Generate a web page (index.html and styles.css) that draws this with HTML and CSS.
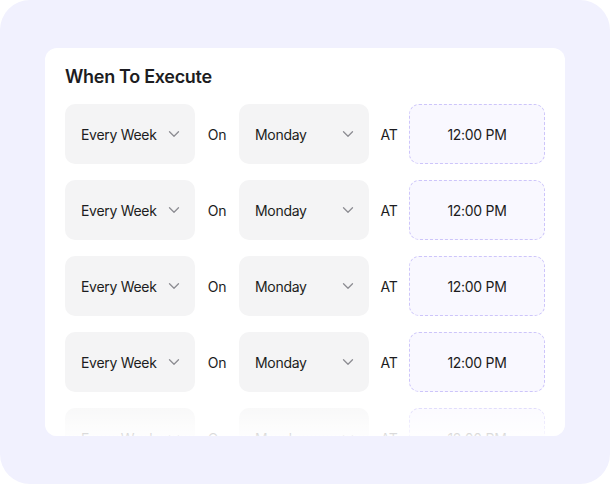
FILE: index.html
```html
<!DOCTYPE html>
<html lang="en">
<head>
    <meta charset="UTF-8">
    <meta name="viewport" content="width=device-width, initial-scale=1.0">
    <title>When To Execute</title>
    <link rel="stylesheet" href="styles.css">
</head>
<body>
    <div class="frame">
        <div class="card">
            <h2 class="title">When To Execute</h2>

            <div class="rows">
                <div class="row">
                    <div class="select"><span>Every Week</span><svg class="chevron" viewBox="0 0 12 8"><path d="M1.5 1.8 6 6.2l4.5-4.4"/></svg></div>
                    <span class="label on">On</span>
                    <div class="select"><span>Monday</span><svg class="chevron" viewBox="0 0 12 8"><path d="M1.5 1.8 6 6.2l4.5-4.4"/></svg></div>
                    <span class="label at">AT</span>
                    <div class="time">12:00 PM</div>
                </div>
                <div class="row">
                    <div class="select"><span>Every Week</span><svg class="chevron" viewBox="0 0 12 8"><path d="M1.5 1.8 6 6.2l4.5-4.4"/></svg></div>
                    <span class="label on">On</span>
                    <div class="select"><span>Monday</span><svg class="chevron" viewBox="0 0 12 8"><path d="M1.5 1.8 6 6.2l4.5-4.4"/></svg></div>
                    <span class="label at">AT</span>
                    <div class="time">12:00 PM</div>
                </div>
                <div class="row">
                    <div class="select"><span>Every Week</span><svg class="chevron" viewBox="0 0 12 8"><path d="M1.5 1.8 6 6.2l4.5-4.4"/></svg></div>
                    <span class="label on">On</span>
                    <div class="select"><span>Monday</span><svg class="chevron" viewBox="0 0 12 8"><path d="M1.5 1.8 6 6.2l4.5-4.4"/></svg></div>
                    <span class="label at">AT</span>
                    <div class="time">12:00 PM</div>
                </div>
                <div class="row">
                    <div class="select"><span>Every Week</span><svg class="chevron" viewBox="0 0 12 8"><path d="M1.5 1.8 6 6.2l4.5-4.4"/></svg></div>
                    <span class="label on">On</span>
                    <div class="select"><span>Monday</span><svg class="chevron" viewBox="0 0 12 8"><path d="M1.5 1.8 6 6.2l4.5-4.4"/></svg></div>
                    <span class="label at">AT</span>
                    <div class="time">12:00 PM</div>
                </div>
                <div class="row">
                    <div class="select"><span>Every Week</span><svg class="chevron" viewBox="0 0 12 8"><path d="M1.5 1.8 6 6.2l4.5-4.4"/></svg></div>
                    <span class="label on">On</span>
                    <div class="select"><span>Monday</span><svg class="chevron" viewBox="0 0 12 8"><path d="M1.5 1.8 6 6.2l4.5-4.4"/></svg></div>
                    <span class="label at">AT</span>
                    <div class="time">12:00 PM</div>
                </div>
            </div>
        </div>
    </div>
</body>
</html>
```

FILE: styles.css
```css
* {
    margin: 0;
    padding: 0;
    box-sizing: border-box;
}

body {
    background: #ffffff;
    font-family: Inter, 'Noto Sans', sans-serif;
    color: #1c1c21;
}

.frame {
    width: 610px;
    height: 484px;
    background: #f1f1fe;
    border-radius: 30px;
    padding: 48px 45px;
}

.card {
    position: relative;
    height: 388px;
    background: #ffffff;
    border-radius: 12px;
    padding: 18px 20px 0;
    overflow: hidden;
}

/* fade out the rows that run past the bottom */
.card::after {
    content: '';
    position: absolute;
    left: 0;
    right: 0;
    bottom: 0;
    height: 34px;
    background: linear-gradient(to bottom, rgba(255, 255, 255, 0.3), rgba(255, 255, 255, 0.88));
}

.title {
    font-size: 18px;
    line-height: 22px;
    font-weight: 600;
    letter-spacing: -0.3px;
    margin-bottom: 16px;
}

.rows {
    display: flex;
    flex-direction: column;
    gap: 16px;
}

.row {
    display: flex;
    align-items: center;
    height: 60px;
    font-size: 14px;
    letter-spacing: -0.3px;
}

.select {
    width: 130px;
    height: 60px;
    flex-shrink: 0;
    display: flex;
    align-items: center;
    justify-content: space-between;
    background: #f4f4f5;
    border-radius: 10px;
    padding: 0 15px 0 16px;
}

.chevron {
    width: 12px;
    height: 8px;
    fill: none;
    stroke: #8d8d93;
    stroke-width: 1.3;
    stroke-linecap: round;
    stroke-linejoin: round;
}

.label {
    text-align: center;
    flex-shrink: 0;
}

.label.on {
    width: 44px;
}

.label.at {
    width: 40px;
}

.time {
    width: 136px;
    height: 60px;
    flex-shrink: 0;
    display: flex;
    align-items: center;
    justify-content: center;
    background: #f9f8ff;
    border: 1px dashed #cdc5fa;
    border-radius: 10px;
}
```
